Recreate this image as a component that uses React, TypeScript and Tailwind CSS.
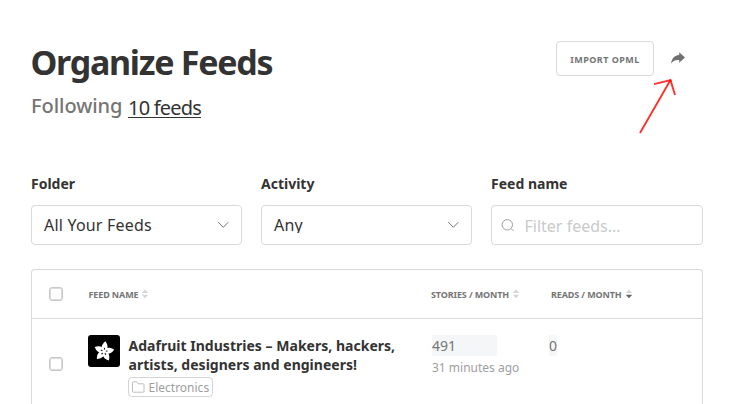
import React from "react";

const FONT = "font-['Noto_Sans','Open_Sans',sans-serif]";

function Chevron() {
  return (
    <svg width="12" height="8" viewBox="0 0 12 8" fill="none" stroke="#757575" strokeWidth="1">
      <path d="M1.3 1.2 6.3 6.3 11.3 1.2" />
    </svg>
  );
}

function SelectField({ label, value }: { label: string; value: string }) {
  return (
    <div>
      <FieldLabel>{label}</FieldLabel>
      <div className="flex h-10 items-center justify-between rounded border border-[#d9d9d9] px-3">
        <span className="-ml-px h-4 overflow-hidden pl-px text-base leading-4 tracking-[0.2px] text-[#333]">{value}</span>
        <Chevron />
      </div>
    </div>
  );
}

function FieldLabel({ children }: { children: React.ReactNode }) {
  return <div className="mb-[11px] h-5 text-sm leading-5 font-bold text-[#333]">{children}</div>;
}

function Checkbox() {
  return <div className="size-3.5 rounded-[3px] border border-[#c6c6c6] bg-white shadow-[inset_0_0_0_1px_#dcdcdc]" />;
}

function SortHeader({ label, active = false }: { label: string; active?: boolean }) {
  return (
    <div className="flex items-center gap-[3px] text-[9px] leading-4 font-bold whitespace-nowrap text-[#757575]">
      <span className="tracking-[-0.12px]">{label}</span>
      <svg width="8" height="10" viewBox="0 0 8 10" className="-mt-0.5">
        <path d="M4 .5 7.2 4H.8z" fill="#d4d4d4" />
        <path d="M.8 5.7h6.4L4 9.2z" fill={active ? "#606060" : "#d4d4d4"} />
      </svg>
    </div>
  );
}

function FlowerLogo() {
  return (
    <div className="flex size-8 shrink-0 items-center justify-center rounded-[3px] bg-black">
      <svg width="32" height="32" viewBox="0 0 32 32">
        {[8, 80, 152, 224, 296].map((a) => (
          <g key={a} transform={`rotate(${a} 16 16.5)`}>
            <path d="M16 16.8C12 14.3 12.2 10.2 16 6.2c3.8 4 4 8.1 0 10.6z" fill="#fff" />
            <path d="M16 12.9v1.8" stroke="#000" strokeWidth="1" />
          </g>
        ))}
      </svg>
    </div>
  );
}

export default function App() {
  return (
    <div className={`relative h-[404px] w-[747px] overflow-hidden bg-white pt-[41px] pr-11 pl-[31px] ${FONT}`}>
      <header className="flex items-start justify-between">
        <div>
          <h1 className="-ml-px h-[42px] pl-[0.5px] text-[34px] leading-[42px] font-bold tracking-[-1.28px] text-[#333]">Organize Feeds</h1>
          <div className="flex h-8 items-start pt-2 text-xl leading-7 text-[#757575]">
            <span className="w-[92px] pt-px font-medium tracking-[-0.05px]">Following</span>
            <span className="ml-[5px] pt-1">
              <span className="block h-[23px] w-[73px] border-b border-[#333] leading-[26px] tracking-[-0.8px] text-[#333]">10 feeds</span>
            </span>
          </div>
        </div>
        <div className="flex items-start">
          <button className="h-[35px] w-[98px] rounded border border-[#d9d9d9] pt-0.5 text-[9px] font-bold tracking-[0.45px] text-[#757575]">
            IMPORT OPML
          </button>
          <svg width="14" height="12" viewBox="0 0 14 12" className="mt-[11px] mr-[18px] ml-[17px]">
            <path d="M8.2.2 14 5.6 8.2 10.8V8.1C4.8 7.8 2 8.6.1 11.6.6 6.8 3.6 3.5 8.2 3.1z" fill="#707070" />
          </svg>
        </div>
      </header>

      <section className="mt-[59px] grid grid-cols-[211px_211px_212px] gap-[19px]">
        <SelectField label="Folder" value="All Your Feeds" />
        <SelectField label="Activity" value="Any" />
        <div>
          <FieldLabel>Feed name</FieldLabel>
          <div className="flex h-10 items-center rounded border border-[#d9d9d9] pl-[9px]">
            <svg width="13" height="13" viewBox="0 0 13 13" fill="none" stroke="#9e9e9e">
              <circle cx="6.3" cy="5.8" r="5.2" />
              <path d="m10 9.5 2.6 2.6" />
            </svg>
            <span className="mt-0.5 ml-[10.5px] text-base text-[#cacaca]">Filter feeds...</span>
          </div>
        </div>
      </section>

      <section className="mt-6 h-[160px] rounded-t border border-b-0 border-[#d9d9d9]">
        <div className="flex h-[49px] items-center border-b border-[#d9d9d9] pl-[17px]">
          <Checkbox />
          <div className="mt-0.5 ml-[25.5px] w-[342.5px]">
            <SortHeader label="FEED NAME" />
          </div>
          <div className="mt-0.5 w-[120px]">
            <SortHeader label="STORIES / MONTH" />
          </div>
          <div className="mt-0.5">
            <SortHeader label="READS / MONTH" active />
          </div>
        </div>
        <div className="flex items-start pt-4 pl-[17px]">
          <div className="mt-[22px]">
            <Checkbox />
          </div>
          <div className="ml-[25px] flex w-[344px]">
            <FlowerLogo />
            <div className="ml-2">
              <div className="pt-px pl-[0.5px] text-sm leading-[19px] font-bold whitespace-nowrap tracking-[0.02px] text-[#333]">
                Adafruit Industries – Makers, hackers,
                <br />
                artists, designers and engineers!
              </div>
              <div className="mt-[3px] flex h-5 w-[85px] items-center rounded-[4px] border border-[#d4d4d4] pl-[3px] text-xs text-[#9e9e9e]">
                <svg width="13" height="12" viewBox="0 0 13 12" fill="none" stroke="#bdbdbd">
                  <path d="M.5 1.5q0-.7.8-.7h3.4l1.5 2h5q.8 0 .8.7v7q0 .7-.8.7h-10q-.7 0-.7-.7z" />
                </svg>
                <span className="ml-[3.5px] pt-px">Electronics</span>
              </div>
            </div>
          </div>
          <div className="w-[117px]">
            <div className="h-[21px] w-[65px] rounded-[2px] bg-[#f5f6f8] text-sm leading-[22px] text-[#757575]">491</div>
            <div className="text-xs leading-[23px] text-[#9e9e9e]">31 minutes ago</div>
          </div>
          <div className="h-[21px] w-2 rounded-[2px] bg-[#f5f6f8] text-sm leading-[22px] text-[#757575]">0</div>
        </div>
      </section>

      <svg className="absolute top-[74px] left-[634px]" width="48" height="64" viewBox="0 0 48 64" fill="none" stroke="#ff3030" strokeWidth="1.9">
        <path d="M6 59 36.5 6M20 10.2 36.5 6.2 41 21" />
        <circle cx="36.3" cy="6.8" r="1.2" fill="#f01010" stroke="none" />
      </svg>
    </div>
  );
}
